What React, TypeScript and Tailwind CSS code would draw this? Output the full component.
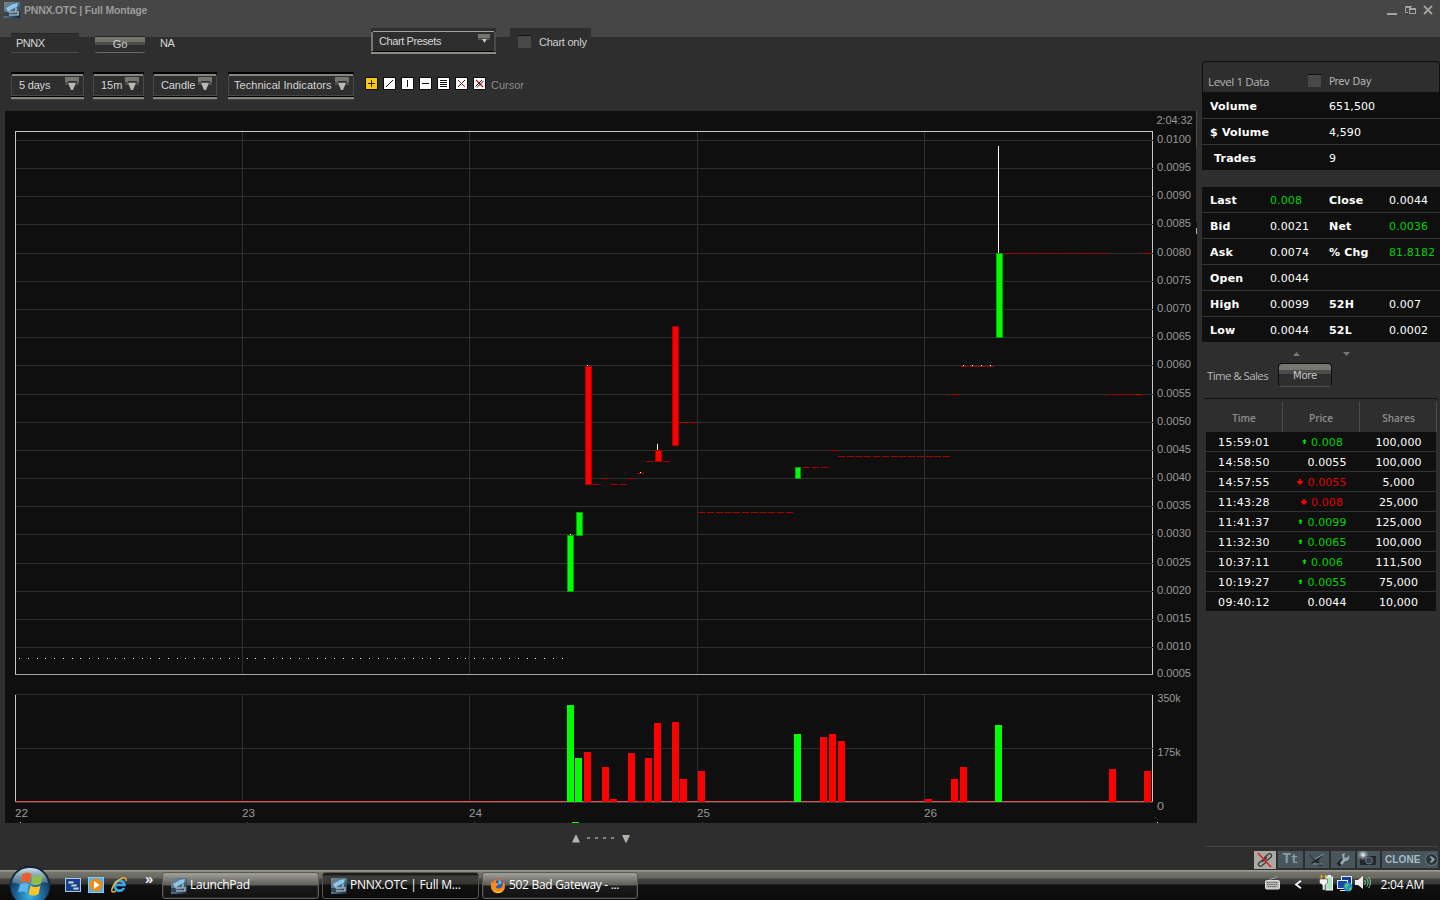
import React from 'react';

type Candle = { x: number; y: number; h: number; w?: number; up?: boolean };

const GRID_Y = [140, 168, 196, 224, 253, 281, 309, 337, 365, 394, 422, 450, 478, 506, 534, 563, 591, 619, 647];
const DAYS = [
    { x: 15, label: '22' },
    { x: 242, label: '23' },
    { x: 469, label: '24' },
    { x: 697, label: '25' },
    { x: 924, label: '26' },
];

const CANDLES: Candle[] = [
    { x: 567, y: 535, h: 57, up: true },
    { x: 576, y: 512, h: 24, up: true },
    { x: 585, y: 366, h: 119 },
    { x: 655, y: 450, h: 12 },
    { x: 672, y: 326, h: 120 },
    { x: 795, y: 467, h: 12, w: 6, up: true },
    { x: 996, y: 253, h: 85, up: true },
];

// x, top, height
const WICKS = [
    [570, 534, 1], [587, 365, 1], [640, 472, 1], [657, 444, 6], [998, 146, 107],
    [963, 365, 1], [972, 365, 1], [981, 365, 1], [990, 365, 1],
];

// flat bars: y, then the left edges
const FLAT: [number, number[]][] = [
    [484, [593, 611, 620]],
    [478, [602, 628]],
    [473, [637]],
    [461, [646, 663]],
    [422, [681, 690]],
    [512, [698, 707, 716, 725, 733, 742, 751, 760, 768, 777, 786]],
    [467, [803, 812, 821]],
    [450, [830]],
    [456, [838, 847, 856, 864, 873, 882, 891, 899, 908, 917, 926, 934, 943]],
    [394, [952, 1109, 1118, 1127, 1136]],
    [366, [961, 970, 978, 987]],
    [253, [1005, 1013, 1022, 1031, 1040, 1048, 1057, 1066, 1075, 1083, 1092, 1101, 1144]],
];

const VOLUME: Candle[] = [
    { x: 567, y: 705, h: 97, up: true },
    { x: 575, y: 758, h: 44, up: true },
    { x: 584, y: 752, h: 50 },
    { x: 602, y: 767, h: 35 },
    { x: 610, y: 799, h: 3 },
    { x: 628, y: 753, h: 49 },
    { x: 637, y: 801, h: 1 },
    { x: 645, y: 758, h: 44 },
    { x: 654, y: 723, h: 79 },
    { x: 672, y: 722, h: 80 },
    { x: 680, y: 779, h: 23 },
    { x: 698, y: 771, h: 31 },
    { x: 794, y: 734, h: 68, up: true },
    { x: 820, y: 737, h: 65 },
    { x: 829, y: 734, h: 68 },
    { x: 838, y: 741, h: 61 },
    { x: 925, y: 799, h: 3 },
    { x: 951, y: 779, h: 23 },
    { x: 960, y: 767, h: 35 },
    { x: 995, y: 725, h: 77, up: true },
    { x: 1109, y: 769, h: 33 },
    { x: 1144, y: 771, h: 31 },
];

const QUOTE = [
    ['Last', '0.008', 'Close', '0.0044'],
    ['Bid', '0.0021', 'Net', '0.0036'],
    ['Ask', '0.0074', '% Chg', '81.8182'],
    ['Open', '0.0044', '', ''],
    ['High', '0.0099', '52H', '0.007'],
    ['Low', '0.0044', '52L', '0.0002'],
];
const GREEN_VALUES = ['0.008', '0.0036', '81.8182'];

const SALES = [
    { time: '15:59:01', price: '0.008', shares: '100,000', dir: 'up' },
    { time: '14:58:50', price: '0.0055', shares: '100,000', dir: '' },
    { time: '14:57:55', price: '0.0055', shares: '5,000', dir: 'down' },
    { time: '11:43:28', price: '0.008', shares: '25,000', dir: 'down' },
    { time: '11:41:37', price: '0.0099', shares: '125,000', dir: 'up' },
    { time: '11:32:30', price: '0.0065', shares: '100,000', dir: 'up' },
    { time: '10:37:11', price: '0.006', shares: '111,500', dir: 'up' },
    { time: '10:19:27', price: '0.0055', shares: '75,000', dir: 'up' },
    { time: '09:40:12', price: '0.0044', shares: '10,000', dir: '' },
];

function AppIcon({ className = '' }: { className?: string }) {
    return (
        <svg width="16" height="16" viewBox="0 0 16 16" className={`shrink-0 ${className}`}>
            <defs>
                <linearGradient id="appIcon" x1="0" y1="0" x2="1" y2="1">
                    <stop offset="0" stopColor="#76838c" />
                    <stop offset=".5" stopColor="#52738a" />
                    <stop offset="1" stopColor="#0d2233" />
                </linearGradient>
            </defs>
            <rect width="16" height="16" fill="url(#appIcon)" />
            <path d="M0 10h4l2 4H0z" fill="#39444c" />
            <path d="M2 6 L9 2 L14 1 L13 5 L8 7 L4 10 Z" fill="#8cc6ea" />
            <path d="M5 10h7V6M5 13h9V9" stroke="#c3d2dc" strokeWidth="1.2" fill="none" />
        </svg>
    );
}

function Select({ label, width, pad, tracking = '' }: { label: string; width: string; pad: string; tracking?: string }) {
    return (
        <div className={`flex flex-col h-[28px] shrink-0 ${width}`}>
            <div className="h-[2px] bg-black" />
            <div className="h-[2px] mx-px bg-[#85857e]" />
            <div className={`flex-1 flex justify-between border-x border-b border-[#484848] pr-[3px] ${pad}`}>
                <span className={`text-[11px] leading-[19px] text-[#d6d6d6] whitespace-nowrap ${tracking}`}>{label}</span>
                <svg width="16" height="16" viewBox="0 0 16 16" className="shrink-0">
                    <path d="M1 1h14v5H1z" fill="#75756d" />
                    <path d="M1 6h14v3H1z" fill="#4e4e4c" />
                    <path d="M4 5.500h9" stroke="#333" />
                    <path d="M4.500 7h7v1l-2.500 6h-2L4.500 8z" fill="#b9b9b2" />
                </svg>
            </div>
            <div className="h-[2px] bg-black" />
            <div className="h-[2px] bg-[#85857e]" />
            <div className="h-px bg-[#444]" />
        </div>
    );
}

function CheckBox() {
    return <div className="w-[13px] h-[13px] bg-[#484848] border-t border-[#0f0f0f] shrink-0" />;
}

const TOOLS = [
    <path d="M6.500 3v7M3 6.500h7" stroke="#222" />,
    <path d="M3 10L10 3" stroke="#111" />,
    <path d="M6.500 3v7" stroke="#111" />,
    <path d="M3 6.500h7" stroke="#111" />,
    <path d="M3 3.500h7M3 5.500h7M3 7.500h7M3 9.500h7" stroke="#111" />,
    <g>
        <path d="M3 3L10 10M3 10L6 7" stroke="#e00" />
        <path d="M3 10L10 3" stroke="#222" strokeDasharray="5 1" />
    </g>,
    <g>
        <path d="M3 3L10 10" stroke="#e00" strokeWidth="1.300" />
        <path d="M2.500 9.500L9 3M4 10.500L10.500 4" stroke="#111" strokeWidth="1" />
    </g>,
];

function Toolbar() {
    return (
        <div className="h-[89px] flex flex-col">
            <div className="h-[50px] flex items-start pl-[11px]">
                <div className="mt-[11px] w-[68px] h-[20px] bg-[#2e2e2e] border-t border-t-[#262626] border-b border-b-[#4b4b4b] pl-[5px] text-[11px] leading-[19px] tracking-[-0.5px] text-[#d6d6d6]">
                    PNNX
                </div>
                <div className="ml-[16px] mt-[14px] w-[50px] h-[17px] rounded-b-[3px] border-t border-t-[#262626] border-b border-b-[#6d6d66] bg-[linear-gradient(#75756d_5px,#4b4b4b_5px,#4b4b4b_8px,#2e2e2e_8px)] text-[11px] leading-[15px] text-center text-[#d0d0cb]">
                    Go
                </div>
                <span className="ml-[15px] mt-[14px] w-[211px] text-[11px] leading-[14px] tracking-[-0.5px] text-[#d6d6d6]">NA</span>
                <div className="mt-[6px] w-[125px] h-[26px] flex flex-col bg-[#2e2e2e]">
                    <div className="h-[3px] shrink-0" />
                    <div className="h-px mx-[2px] bg-[#a5a59d] shrink-0" />
                    <div className="flex-1 flex justify-between border-x-2 border-l-[#77776f] border-r-[#4b4b4b] pl-[6px] pr-[3px]">
                        <span className="text-[11px] leading-[19px] tracking-[-0.4px] text-[#d6d6d6]">Chart Presets</span>
                        <svg width="14" height="12" viewBox="0 0 14 12">
                            <path d="M1 2h12v4H1z" fill="#75756d" />
                            <path d="M1 6h12v2H1z" fill="#4e4e4c" />
                            <path d="M5 7h5L7.500 11z" fill="#c4c4bd" />
                        </svg>
                    </div>
                    <div className="h-px mx-[2px] bg-black" />
                    <div className="h-[2px] bg-[#8d8d86]" />
                </div>
                <div className="ml-[14px] mt-[6px] w-[81px] h-[24px] bg-[#2e2e2e] flex items-start pt-[7px] pl-[8px]">
                    <CheckBox />
                    <span className="ml-[8px] text-[11px] leading-[15px] tracking-[-0.25px] text-[#d0d0d0] whitespace-nowrap">Chart only</span>
                </div>
            </div>
            <div className="flex items-start pl-[11px]">
                <Select label="5 days" width="w-[73px]" pad="pl-[7px]" tracking="tracking-[-0.2px]" />
                <div className="w-[9px]" />
                <Select label="15m" width="w-[51px]" pad="pl-[7px]" />
                <div className="w-[9px]" />
                <Select label="Candle" width="w-[64px]" pad="pl-[7px]" tracking="tracking-[-0.1px]" />
                <div className="w-[11px]" />
                <Select label="Technical Indicators" width="w-[126px]" pad="pl-[5px]" tracking="tracking-[0.05px]" />
                <div className="flex gap-[5px] mt-[5px] ml-[11px]">
                    {TOOLS.map((mark, i) => (
                        <svg key={i} width="13" height="13" viewBox="0 0 13 13">
                            <rect x=".5" y=".5" width="12" height="12" fill={i === 0 ? '#ffc80a' : '#fdfdfd'} stroke="#0c0c0c" />
                            {mark}
                        </svg>
                    ))}
                </div>
                <span className="ml-[5px] mt-[6px] text-[11px] leading-[14px] text-[#8b8b8b]">Cursor</span>
            </div>
        </div>
    );
}

function Chart() {
    return (
        <svg
            width="1192"
            height="712"
            viewBox="5 111 1192 712"
            shapeRendering="crispEdges"
            className="block ml-[5px] bg-[#0f0f0f]"
            fontFamily="'Liberation Sans', Arial, sans-serif"
            fontSize="10"
        >
            {/* frames */}
            <path d="M15.500 675V131.500H1152.500V675" stroke="#c9c9c9" fill="none" />
            <path d="M15 674.500H1153" stroke="#a5a5a5" />
            <path d="M15.500 695V802M1152.500 695V802" stroke="#c9c9c9" />

            {/* grid */}
            {GRID_Y.map((y) => (
                <rect key={y} x="16" y={y} width="1137" height="1" fill="#2e2e2e" />
            ))}
            {DAYS.slice(1).map((d) => (
                <path key={d.x} d={`M${d.x + 0.5} 132V674M${d.x + 0.5} 694V801`} stroke="#2e2e2e" />
            ))}
            <path d="M15 694.500H1153M16 748.500H1153" stroke="#2e2e2e" />
            <rect x="15" y="801" width="1138" height="1" fill="#e85050" />
            <rect x="15" y="802" width="1138" height="1" fill="#383838" />

            {/* prices */}
            {Array.from({ length: 63 }, (_, i) => (
                <rect key={i} x={Math.round(19 + i * 8.75)} y="658" width="1" height="1" fill="#e8e8e8" />
            ))}
            {FLAT.map(([y, xs]) =>
                xs.map((x) => <rect key={`${y}-${x}`} x={x} y={y} width="7" height="1" fill="#aa0000" />)
            )}
            {CANDLES.map((c) => (
                <rect
                    key={c.x}
                    x={c.x + 0.5}
                    y={c.y + 0.5}
                    width={(c.w ?? 7) - 1}
                    height={c.h - 1}
                    fill={c.up ? '#00ff00' : '#ff0000'}
                    stroke={c.up ? '#00a000' : '#aa0000'}
                />
            ))}
            {WICKS.map(([x, y, h]) => (
                <rect key={x} x={x} y={y} width="1" height={h} fill="#fff" />
            ))}
            {VOLUME.map((c) => (
                <rect key={c.x} x={c.x} y={c.y} width="7" height={c.h} fill={c.up ? '#00ff00' : '#ff0000'} />
            ))}

            {/* strip below the dates */}
            <rect x="572" y="822" width="7" height="1" fill="#00ff00" />
            {[20, 1157].map((x) => (
                <rect key={x} x={x} y="822" width="1" height="1" fill="#ddd" />
            ))}
            {[247, 474, 702, 929].map((x) => (
                <rect key={x} x={x} y="822" width="1" height="1" fill="#444" />
            ))}

            {/* splitter on the right edge */}
            <rect x="1196" y="111" width="1" height="111" fill="#2e2e2e" />
            <rect x="1196" y="111" width="1" height="37" fill="#4a4a4a" />
            <rect x="1196" y="228" width="1" height="6" fill="#aaa" />

            <g fill="#999">
                <text x="1156.500" y="124" fontSize="11" textLength="36">2:04:32</text>
                {GRID_Y.map((y, i) => (
                    <text key={y} x="1157" y={y + 2.500} textLength="34" lengthAdjust="spacingAndGlyphs">
                        {(0.01 - i * 0.0005).toFixed(4)}
                    </text>
                ))}
                <text x="1157" y="677" textLength="34" lengthAdjust="spacingAndGlyphs">0.0005</text>
                <text x="1157.500" y="702" textLength="23" lengthAdjust="spacingAndGlyphs">350k</text>
                <text x="1157.500" y="756" textLength="23" lengthAdjust="spacingAndGlyphs">175k</text>
                <text x="1157" y="810" textLength="7" lengthAdjust="spacingAndGlyphs">0</text>
                {DAYS.map((d) => (
                    <text key={d.x} x={d.x} y="817" textLength="13" lengthAdjust="spacingAndGlyphs">{d.label}</text>
                ))}
            </g>
        </svg>
    );
}

function Level1() {
    const cell = 'text-[11px] leading-[27px] whitespace-pre';
    const label = `${cell} font-bold tracking-[0.2px]`;
    return (
        <div>
            <div className="h-[31px] border border-b-0 border-[#0f0f0f] rounded-t-[4px] flex items-start pt-[12px] pl-[5px]">
                <span className="w-[100px] font-['Open_Sans'] text-[11.5px] leading-[15px] tracking-[-0.35px] text-[#b5b5b5]">Level 1 Data</span>
                <CheckBox />
                <span className="ml-[8px] text-[10px] leading-[15px] tracking-[-0.3px] text-[#b5b5b5]">Prev Day</span>
            </div>
            {[['Volume', '651,500'], ['$ Volume', '4,590'], [' Trades', '9']].map(([k, v], i) => (
                <div
                    key={k}
                    className={`flex bg-[#0f0f0f] border-[#333] pl-[8px] text-white ${
                        i === 0 ? 'h-[27px] pt-px border-b' : i === 1 ? 'h-[26px] border-b' : 'h-[25px]'
                    }`}
                >
                    <span className={`${label} w-[119px]`}>{k}</span>
                    <span className={`${cell} tracking-[0.1px]`}>{v}</span>
                </div>
            ))}
            <div className="mt-[17px]">
                {QUOTE.map((row, i) => (
                    <div key={row[0]} className={`flex bg-[#0f0f0f] border-[#333] pl-[8px] text-white ${i < 5 ? 'h-[26px] border-b' : 'h-[25px]'}`}>
                        <span className={`${label} w-[60px]`}>{row[0]}</span>
                        <span className={`${cell} tracking-[0.1px] w-[59px] ${GREEN_VALUES.includes(row[1]) ? 'text-[#00d200]' : ''}`}>{row[1]}</span>
                        <span className={`${label} w-[60px]`}>{row[2]}</span>
                        <span className={`${cell} tracking-[0.1px] ${GREEN_VALUES.includes(row[3]) ? 'text-[#00d200]' : ''}`}>{row[3]}</span>
                    </div>
                ))}
            </div>
        </div>
    );
}

function Arrow({ dir }: { dir: string }) {
    return (
        <svg width="6" height="7" viewBox="0 0 6 7" className="mt-[7px] mr-[4px] shrink-0">
            {dir === 'up' && <path d="M3.500 0L6 2.500H4.500V5H2.500V2.500H1z" fill="#00e000" />}
            {dir === 'down' && <path d="M2 0H4V2H6V3L3 6L0 3V2H2z" fill="#f00" />}
        </svg>
    );
}

function TimeSales() {
    return (
        <div>
            <div className="h-[20px] pt-[10px] pl-[91px] flex gap-[43px]">
                <svg width="7" height="4" viewBox="0 0 7 4"><path d="M0 4h7L3.500 0z" fill="#77776f" /></svg>
                <svg width="7" height="4" viewBox="0 0 7 4"><path d="M0 0h7L3.500 4z" fill="#77776f" /></svg>
            </div>
            <div className="h-[36px] flex items-start pl-[5px]">
                <span className="mt-[6px] w-[71px] font-['Open_Sans'] text-[11.5px] leading-[15px] tracking-[-0.6px] text-[#b5b5b5] whitespace-nowrap">Time &amp; Sales</span>
                <button className="mt-px w-[54px] h-[24px] rounded-[4px] border border-[#0f0f0f] border-b-[#4b4b4b] bg-[linear-gradient(#77776f_6px,#4b4b4b_6px,#4b4b4b_10px,#2e2e2e_10px)] text-[10px] leading-[24px] tracking-[-0.2px] text-[#c8c8c8]">
                    More
                </button>
            </div>
            <div className="ml-[2px] mr-[2px] h-[4px] border-t border-[#0f0f0f] rounded-t-[2px]" />
            <div className="ml-[4px] w-[231px]">
                <div className="h-[30px] flex text-center text-[10px] leading-[32px] text-[#8e8e8e] font-['Open_Sans'] font-semibold">
                    <span className="w-[77px] border-r border-[#4b4b4b]">Time</span>
                    <span className="w-[77px] border-r border-[#4b4b4b]">Price</span>
                    <span className="w-[77px] pl-px border-r border-[#4b4b4b]">Shares</span>
                </div>
                {SALES.map((s, i) => (
                    <div
                        key={s.time}
                        className={`w-[230px] flex bg-[#0f0f0f] border-[#333] text-[11px] leading-[21px] text-white ${i < 8 ? 'h-[20px] border-b' : 'h-[19px]'}`}
                    >
                        <span className="w-[76px] text-center tracking-[0.3px]">{s.time}</span>
                        <span
                            className={`w-[79px] pl-px flex items-start justify-center tracking-[0.1px] ${s.dir === 'up' ? 'text-[#00d200]' : s.dir === 'down' ? 'text-[#e00000]' : ''}`}
                        >
                            <Arrow dir={s.dir} />
                            {s.price}
                        </span>
                        <span className="w-[75px] text-center tracking-[0.1px]">{s.shares}</span>
                    </div>
                ))}
            </div>
        </div>
    );
}

function PanelTools() {
    return (
        <div className="ml-[3px] w-[233px] h-[24px] border-t border-[#454545] flex justify-end pt-[4px] gap-[2px]">
            <svg width="22" height="18" viewBox="0 0 22 18">
                <rect width="22" height="18" fill="#aaa9a4" />
                <g fill="none" stroke="#3b3b38" strokeWidth="1.300">
                    <rect x="4" y="10" width="8" height="4" rx="2" transform="rotate(-40 8 12)" />
                    <rect x="10" y="4" width="8" height="4" rx="2" transform="rotate(-40 14 6)" />
                    <path d="M8 11l5-5" />
                </g>
                <path d="M4 2L17 16" stroke="#dc2020" strokeWidth="1.500" />
            </svg>
            <div className="w-[25px] h-[17px] bg-[#48565c] text-center text-[#8b9ca5] font-bold leading-[16px] font-['Liberation_Mono',monospace]">
                <span className="text-[14px]">T</span><span className="text-[13px]">t</span>
            </div>
            <svg width="24" height="17" viewBox="0 0 24 17">
                <rect width="24" height="17" fill="#48565c" />
                <path d="M5 4l5 5 9-6-6 7 5 5h-4l-4-4-5 3 4-5-5-5z" fill="#20282c" />
                <path d="M10 8l9-5M8 13h9" stroke="#8295a0" />
            </svg>
            <svg width="24" height="17" viewBox="0 0 24 17">
                <rect width="24" height="17" fill="#48565c" />
                <path d="M7 14l5-5" stroke="#1c2327" strokeWidth="4" />
                <path d="M11 3l3-1-1 4 3 1 2-3c1 4-1 6-4 6l-3 4-2-2 3-4z" fill="#97aab4" />
            </svg>
            <svg width="23" height="17" viewBox="0 0 23 17">
                <defs>
                    <radialGradient id="flash"><stop stopColor="#fff" /><stop offset="1" stopColor="#9aa5aa" stopOpacity="0" /></radialGradient>
                </defs>
                <rect width="23" height="17" fill="#48565c" />
                <path d="M3 5h16v9H3z" fill="#20282c" />
                <circle cx="12" cy="9.500" r="3.500" fill="#37454c" stroke="#67777f" />
                <circle cx="6" cy="4" r="6" fill="url(#flash)" />
            </svg>
            <div className="w-[56px] h-[17px] bg-[#48565c] flex items-center pl-[3px] gap-[4px] font-bold text-[10px] tracking-[0.1px] text-[#a7bac5]">
                CLONE
                <svg width="13" height="15" viewBox="0 0 13 15" className="shrink-0">
                    <circle cx="6.500" cy="7.500" r="6" fill="#2b3438" stroke="#6b7c85" />
                    <path d="M4.500 4.500h2.500l3 3-3 3H4.500l2.500-3z" fill="#8fa2ac" />
                </svg>
            </div>
        </div>
    );
}

function TaskButton({ icon, label, width, tracking, active }: { icon: React.ReactNode; label: string; width: string; tracking: string; active?: boolean }) {
    return (
        <div
            className={`h-[27px] ${width} shrink-0 rounded-[3px] border flex items-center gap-[3px] pl-[8px] text-white text-[12px] font-['Open_Sans'] whitespace-nowrap ${
                active
                    ? 'border-[#55554f] bg-[linear-gradient(#1c1c1c_2px,#3e3e3b_3px,#343432_11px,#101010_12px,#0c0c0c)]'
                    : 'border-[#5c5c57] shadow-[inset_0_0_0_1px_#77777033] bg-[linear-gradient(#a5a59e_0px,#85857e_5px,#5e5e5a_12px,#1b1b1b_13px,#111)]'
            }`}
        >
            {icon}
            <span className={`-mt-px leading-[24px] ${tracking}`}>{label}</span>
        </div>
    );
}

function StartOrb() {
    return (
        <svg width="42" height="34" viewBox="0 0 42 34" className="shrink-0">
            <defs>
                <radialGradient id="orb" cx=".5" cy=".75" r=".7">
                    <stop stopColor="#36b5e6" />
                    <stop offset=".55" stopColor="#1c5a8c" />
                    <stop offset="1" stopColor="#10283e" />
                </radialGradient>
                <linearGradient id="orbShine" x1="0" y1="0" x2="0" y2="1">
                    <stop stopColor="#d2e6ef" />
                    <stop offset="1" stopColor="#7ba3b8" stopOpacity=".35" />
                </linearGradient>
            </defs>
            <circle cx="21" cy="20" r="20" fill="url(#orb)" stroke="#18232b" />
            <path d="M3 17C5 6 13 2 21 2s16 4 18 15c-8-3-12 3-20 3S8 16 3 17z" fill="url(#orbShine)" />
            <g transform="translate(1.500 -1)">
                <path d="M12 9c3-2 6-2 9 0l-2 9c-3-2-6-2-9 0z" fill="#e5602a" />
                <path d="M22.500 10c3 2 6 2 10-0.500l-2 9c-3 2-7 2-10 0.200z" fill="#8dc04a" />
                <path d="M9.500 19.500c3-2 6-2 9 0l-2 8.500c-3-2-6-2-9-.5z" fill="#5cb5ec" />
                <path d="M20 20.500c3 2 6 2 10 0l-2 8.500c-3 2-7 2-10 0z" fill="#fbc42c" />
            </g>
        </svg>
    );
}

function FirefoxIcon() {
    return (
        <svg width="16" height="16" viewBox="0 0 17 17" className="shrink-0 -ml-px">
            <circle cx="8.500" cy="8.500" r="7.500" fill="#e8661b" />
            <circle cx="9.500" cy="7" r="5" fill="#2a5fb0" />
            <path d="M9 2c2 0 4 2 3 4l-3 1z" fill="#75b7ea" />
            <path d="M1 4l2 1c1-2 3-3 4-3L6 5l3 1-1 2-2 1c1 3 5 3 7 0l1-5c3 4 2 11-4 12S0 13 1 4z" fill="#f68a1f" />
            <path d="M3 12c3 4 9 4 11-1-1 6-8 7-11 1z" fill="#ffd34a" />
        </svg>
    );
}

function Taskbar() {
    return (
        <div className="h-[30px] w-full flex bg-[linear-gradient(#8f8f88_0px,#a3a39b_1px,#75756d_2px,#68685f_8px,#454543_9px,#343433_14px,#101010_15px,#0a0a0a)]">
            <div className="-mt-[4px] ml-[9px] w-[42px] h-[34px]"><StartOrb /></div>
            <div className="ml-[14px] mt-[7px] flex gap-[7px] items-start">
                <svg width="16" height="16" viewBox="0 0 16 16">
                    <rect x=".5" y="1.500" width="15" height="13" fill="#16428f" stroke="#a9c7e8" />
                    <path d="M3 4h6v3H3zM6 7h6v3H6zM8 10h6v3H8z" fill="#b7d4ef" stroke="#173663" strokeWidth=".7" />
                </svg>
                <svg width="16" height="16" viewBox="0 0 16 16">
                    <rect x=".5" y=".5" width="15" height="15" fill="#55aee6" stroke="#7bd0fa" />
                    <circle cx="8" cy="8" r="6.500" fill="#f18b14" />
                    <path d="M6 4l5.500 4L6 12z" fill="#fff" />
                </svg>
                <svg width="17" height="16" viewBox="0 0 17 16">
                    <path d="M13 11a5 5 0 1 1 .5-3H5" stroke="#36a9ef" strokeWidth="2.700" fill="none" />
                    <path d="M15 4c1-4-3-4-7-1C3 6 0 12 1 14.500c1 1 3 0 4-.5" stroke="#f3b22c" strokeWidth="1.500" fill="none" />
                </svg>
            </div>
            <span className="ml-[17px] w-[17px] text-white text-[15px] leading-[17px] font-semibold font-['Open_Sans']">»</span>
            <div className="flex gap-[3px] mt-[2px]">
                <TaskButton icon={<AppIcon />} label="LaunchPad" width="w-[157px]" tracking="tracking-[-0.25px]" />
                <TaskButton icon={<AppIcon />} label="PNNX.OTC | Full M..." width="w-[157px]" tracking="tracking-[-0.2px]" active />
                <TaskButton icon={<FirefoxIcon />} label="502 Bad Gateway - ..." width="w-[156px]" tracking="tracking-[-0.3px]" />
            </div>
            <div className="ml-auto flex items-start pr-[16px]">
                <svg width="16" height="14" viewBox="0 0 16 14" className="mt-[6px]">
                    <path d="M5 4C5 1 11 4 12 0" stroke="#aaa" fill="none" />
                    <rect x=".5" y="4.500" width="14" height="8.500" rx="1" fill="#b9b9b6" stroke="#ddd" />
                    <path d="M2 6.500h11M2 8.500h11M3 10.500h9" stroke="#555" strokeDasharray="1.200 1" />
                </svg>
                <svg width="8" height="9" viewBox="0 0 8 9" className="ml-[13px] mt-[10px]">
                    <path d="M7 .8L2 4.500L7 8.200" stroke="#eef3ff" strokeWidth="1.800" fill="none" />
                </svg>
                <svg width="15" height="17" viewBox="0 0 15 17" className="ml-[17px] mt-[5px]">
                    <rect x="7" y="2" width="6.500" height="13" fill="#a9e2bd" stroke="#f5f5f5" />
                    <rect x="8.500" width="3.500" height="2" fill="#eee" />
                    <path d="M2.500 0v4M6.500 0v4" stroke="#f3ae22" strokeWidth="1.500" />
                    <path d="M.5 4h8v4L6 10v5H3.500v-5L.5 8z" fill="#f3f3f3" stroke="#333" strokeWidth=".5" />
                </svg>
                <svg width="16" height="16" viewBox="0 0 16 16" className="ml-[3px] mt-[6px]">
                    <rect x="4.500" y=".5" width="10" height="8" fill="#173f91" stroke="#e0ecf8" />
                    <rect x=".5" y="4.500" width="10" height="8" fill="#1a4aa6" stroke="#e0ecf8" />
                    <path d="M3 14.500h6" stroke="#e0ecf8" />
                    <circle cx="11" cy="11" r="4.500" fill="#268ae0" />
                    <path d="M8 9c2-3 4-1 4 0s-2 1-2 3-2 0-2-3zM12 12l3-1c0 3-2 4-3 3z" fill="#57cf45" />
                </svg>
                <svg width="17" height="16" viewBox="0 0 17 16" className="ml-px mt-[5px]">
                    <path d="M1 5h3l5-4v13l-5-4H1z" fill="#eee" />
                    <path d="M10.500 5c1 1 1 4 0 5M12.500 3.500c2 2 2 6 0 8M14.500 2c2.500 3 2.500 8 0 11" stroke="#7be092" fill="none" />
                </svg>
                <span className="ml-[10px] mt-[7px] text-white text-[12px] leading-[16px] tracking-[-0.25px] font-['Open_Sans'] whitespace-nowrap">2:04 AM</span>
            </div>
        </div>
    );
}

export default function App() {
    return (
        <div className="w-[1440px] h-[900px] overflow-hidden flex flex-col bg-[linear-gradient(#464646_37px,#2e2e2e_37px)] font-['Liberation_Sans',Arial,sans-serif]">
            <header className="h-[22px] shrink-0 flex items-start pt-[2px] pl-[4px] pr-[6px]">
                <AppIcon />
                <h1 className="ml-[4px] mt-px text-[10.5px] leading-[15px] font-bold tracking-[-0.2px] text-[#9b9b9b]">PNNX.OTC | Full Montage</h1>
                <svg width="47" height="12" viewBox="0 0 47 12" className="ml-auto mt-[2px]" fill="none" stroke="#a3a39d">
                    <path d="M0 10h10" strokeWidth="2" />
                    <path d="M24 3.500H18.500V8.500H21M18 2.500h7" />
                    <rect x="22.500" y="5.500" width="6" height="4" />
                    <path d="M22 4.500h7" />
                    <path d="M37 2l8 8M45 2l-8 8" strokeWidth="1.800" />
                </svg>
            </header>

            <main className="h-[848px] shrink-0 flex">
                <section className="w-[1197px] flex flex-col">
                    <Toolbar />
                    <Chart />
                    <div className="pt-[12px] pl-[572px]">
                        <svg width="62" height="8" viewBox="0 0 62 8" fill="#b3b3ac">
                            <path d="M0 7.500h8L4.500 0h-1z" />
                            <path d="M15 2h3v2h-3zM23 2h3v2h-3zM31 2h3v2h-3zM39 2h3v2h-3z" fill="#85857e" />
                            <path d="M50 0h8L54.500 7.500h-1z" />
                        </svg>
                    </div>
                </section>

                <aside className="ml-[5px] w-[238px] flex flex-col pt-[39px] font-['DejaVu_Sans',Verdana,sans-serif]">
                    <Level1 />
                    <TimeSales />
                    <div className="mt-auto font-['Liberation_Sans',Arial,sans-serif]">
                        <PanelTools />
                    </div>
                </aside>
            </main>

            <Taskbar />
        </div>
    );
}
